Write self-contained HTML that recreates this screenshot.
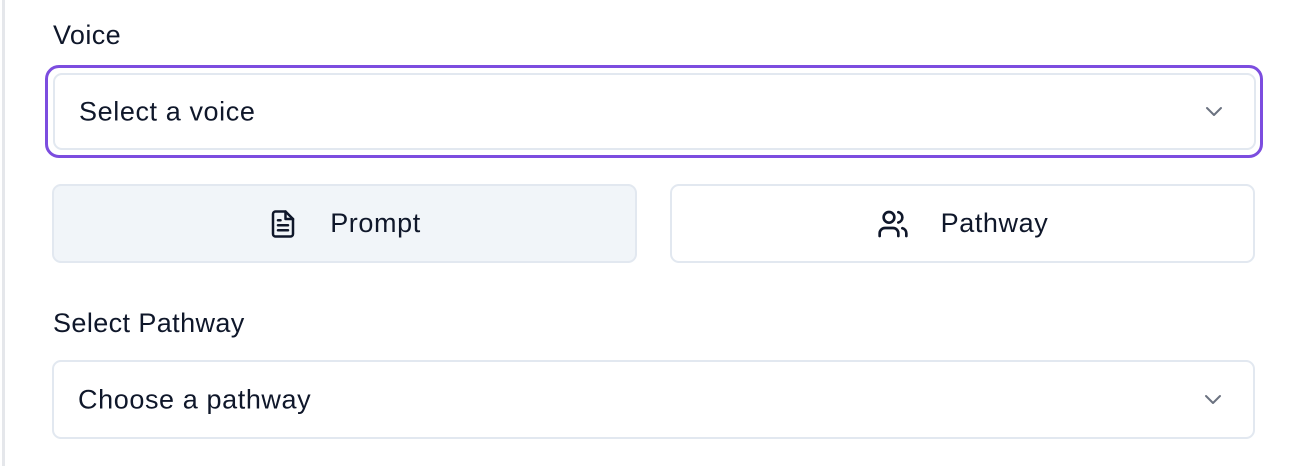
<!DOCTYPE html>
<html><head><style>
body{margin:0;width:1300px;height:466px;background:#fff;font-family:"Liberation Sans",sans-serif;color:#0f172a;position:relative;overflow:hidden}
.vl{position:absolute;left:2px;top:0;width:3px;height:466px;background:#e5e7eb}
.lbl{position:absolute;left:53px;font-size:27px;letter-spacing:0.4px}
.sel{position:absolute;left:52px;width:1201px;height:77px;border:2px solid #e2e8f0;border-radius:9px;box-sizing:border-box;background:#fff}
.sel span{position:absolute;left:24px;top:50%;transform:translateY(-50%);font-size:27px;letter-spacing:0.6px}
.sel svg{position:absolute;right:30px;top:50%;margin-top:-9px}
.ring{position:absolute;left:45px;top:65px;width:1218px;height:93px;border:3px solid #7c4ddf;border-radius:14px;box-sizing:border-box}
.btn{position:absolute;top:184px;width:585px;height:79px;border:2px solid #e2e8f0;border-radius:9px;box-sizing:border-box;font-size:27px;letter-spacing:0.6px;display:flex;align-items:center;justify-content:center;gap:32px}
</style></head><body>
<div class="vl"></div>
<div class="lbl" style="top:20px">Voice</div>
<div class="ring"></div>
<div class="sel" style="top:73px;left:53px;width:1203px"><span>Select a voice</span><svg width="20" height="18" viewBox="0 0 20 18"><path d="M3 5l7 7 7-7" fill="none" stroke="#6b7280" stroke-width="2" stroke-linecap="round" stroke-linejoin="round"/></svg></div>
<div class="btn" style="left:52px;background:#f1f5f9"><svg width="30" height="32" viewBox="0 0 24 24" fill="none" stroke="#0f172a" stroke-width="2" stroke-linecap="round" stroke-linejoin="round"><path d="M14 2H6a2 2 0 0 0-2 2v16a2 2 0 0 0 2 2h12a2 2 0 0 0 2-2V8z"/><path d="M14 2v6h6"/><path d="M16 13H8M16 17H8M10 9H8"/></svg><span>Prompt</span></div>
<div class="btn" style="left:670px;background:#fff"><svg width="32" height="32" viewBox="0 0 24 24" fill="none" stroke="#0f172a" stroke-width="2" stroke-linecap="round" stroke-linejoin="round"><path d="M16 21v-2a4 4 0 0 0-4-4H6a4 4 0 0 0-4 4v2"/><circle cx="9" cy="7" r="4"/><path d="M22 21v-2a4 4 0 0 0-3-3.87M16 3.13a4 4 0 0 1 0 7.75"/></svg><span>Pathway</span></div>
<div class="lbl" style="top:308px">Select Pathway</div>
<div class="sel" style="top:360px;height:79px;width:1203px"><span>Choose a pathway</span><svg width="20" height="18" viewBox="0 0 20 18"><path d="M3 5l7 7 7-7" fill="none" stroke="#6b7280" stroke-width="2" stroke-linecap="round" stroke-linejoin="round"/></svg></div>
</body></html>
